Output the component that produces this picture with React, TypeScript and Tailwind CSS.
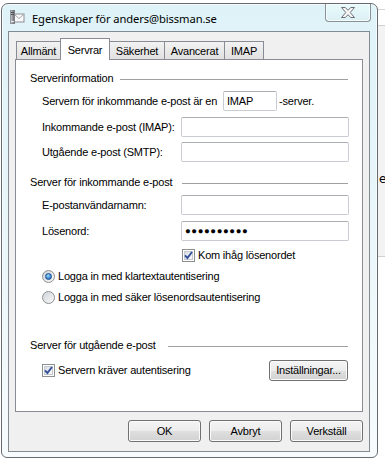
import React from "react";

// Windows 7 style property dialog – "Servrar" tab

function GroupHeader({ label, lineAt }: { label: string; lineAt: string }) {
  return (
    <div className="flex h-[18px] items-center pl-[14px] pr-[14px]">
      <span className={`${lineAt} shrink-0 whitespace-nowrap`}>{label}</span>
      <div className="mt-[2px] h-px flex-1 bg-[#a0a0a0]" />
    </div>
  );
}

function TextBox({ value, className = "" }: { value?: React.ReactNode; className?: string }) {
  return (
    <div
      className={`flex h-[20px] items-center rounded-[2px] border border-[#c9ccd2] border-t-[#abadb3] bg-white px-[3px] ${className}`}
    >
      {value}
    </div>
  );
}

function Checkbox() {
  return (
    <div className="flex h-[13px] w-[13px] shrink-0 items-center justify-center border border-[#8e8f8f] bg-white">
      <div className="flex h-[9px] w-[9px] items-center justify-center border border-[#c5c9cf] bg-linear-to-br from-[#d9dde3] to-[#fbfbfb]">
        <svg width="9" height="9" viewBox="0 0 9 9" className="overflow-visible">
          <path d="M1 4.3 L3.4 7 L8 1" fill="none" stroke="#34509a" strokeWidth="1.9" />
        </svg>
      </div>
    </div>
  );
}

function Radio({ checked }: { checked?: boolean }) {
  return (
    <div className="flex h-[13px] w-[13px] shrink-0 items-center justify-center rounded-full border border-[#8e8f8f] bg-linear-to-br from-[#cfd3d8] to-[#fafafa]">
      {checked && (
        <div className="h-[7px] w-[7px] rounded-full border border-[#1a4d8e] bg-[radial-gradient(circle_at_40%_35%,#a6dcf7_0%,#3c8fd4_55%,#1d5aa3_100%)]" />
      )}
    </div>
  );
}

function Button({ children, className = "" }: { children: React.ReactNode; className?: string }) {
  return (
    <div
      className={`flex items-center justify-center rounded-[3px] border border-[#707070] bg-[linear-gradient(to_bottom,#f4f4f4_0%,#ececec_50%,#dfdfdf_51%,#d2d2d2_100%)] shadow-[inset_0_0_0_1px_#fbfbfb] ${className}`}
    >
      {children}
    </div>
  );
}

function Tab({ label, w, selected }: { label: string; w: string; selected?: boolean }) {
  if (selected) {
    return (
      <div
        className={`${w} z-10 -mb-px -ml-px flex h-[22px] items-start justify-center border border-b-0 border-[#898c95] bg-white pt-[3px]`}
      >
        {label}
      </div>
    );
  }
  return (
    <div
      className={`${w} -ml-px flex h-[18px] items-center justify-center border border-b-0 border-[#898c95] bg-linear-to-b from-[#f2f2f2] to-[#e1e1e1] pt-px`}
    >
      {label}
    </div>
  );
}

export default function App() {
  return (
    <div className="flex h-[463px] w-[385px] overflow-hidden bg-white pl-px pt-[3px] font-['Liberation_Sans',Arial,sans-serif] text-[11px] tracking-[-0.2px] text-black">
      {/* Window frame */}
      <div className="flex h-[455px] w-[377px] shrink-0 flex-col rounded-t-[7px] rounded-b-[6px] border border-[#676b70] bg-linear-to-b from-[#def3f8] via-[#eaf6fa] to-[#f7fbfd] shadow-[inset_0_0_0_1px_#f6fcfe]">
        {/* Title bar */}
        <div className="flex h-[27px] shrink-0 items-start">
          <svg width="16" height="16" viewBox="0 0 16 16" className="ml-[7px] mt-[5px] shrink-0">
            <rect x="5" y="5" width="10" height="8" fill="#fbfbfb" stroke="#8a8d92" />
            <path d="M5.5 5.5 L10 9.5 L14.5 5.5" fill="none" stroke="#a4a7ab" />
            <rect x="1" y="1" width="5" height="14" fill="#7c8086" />
            <rect x="1.5" y="1.5" width="2" height="13" fill="#b2b6bb" />
            <rect x="2" y="3" width="3" height="1" fill="#4b4f55" />
            <rect x="2" y="5" width="3" height="1" fill="#4b4f55" />
            <rect x="2" y="12" width="3" height="1" fill="#e9ebee" />
          </svg>
          <span className="ml-[7px] mt-[7px] whitespace-nowrap font-['Noto_Sans',sans-serif] text-[11.2px] leading-[16px] tracking-[-0.1px] text-black">
            Egenskaper för anders@bissman.se
          </span>
          <div className="flex-1" />
          <div className="mr-[6px] flex h-[18px] w-[46px] shrink-0 items-center justify-center rounded-b-[4px] border border-t-0 border-[#8b9197] bg-linear-to-b from-[#e9fafb] to-[#dcf0f5] shadow-[inset_0_0_0_1px_#f4fdfe]">
            <svg width="14" height="11" viewBox="0 0 14 11">
              <path
                d="M0.5 0.5 H4.3 L7 3.3 L9.7 0.5 H13.5 L9.2 5.5 L13.5 10.5 H9.7 L7 7.7 L4.3 10.5 H0.5 L4.8 5.5 Z"
                fill="#f7f7f7"
                stroke="#6a6e73"
                strokeLinejoin="round"
              />
            </svg>
          </div>
        </div>

        {/* Client area */}
        <div className="mb-[5px] ml-[6px] mr-[7px] flex flex-1 flex-col border border-[#848a91] bg-[#f0f0f0] px-[6px] pt-[6px]">
          {/* Tabs */}
          <div className="flex h-[21px] items-end pl-[2px]">
            <Tab label="Allmänt" w="w-[45px]" />
            <Tab label="Servrar" w="w-[50px]" selected />
            <Tab label="Säkerhet" w="w-[56px]" />
            <Tab label="Avancerat" w="w-[61px]" />
            <Tab label="IMAP" w="w-[40px]" />
          </div>

          {/* Tab panel */}
          <div className="flex h-[353px] flex-col border border-[#898c95] bg-white pt-[9px]">
            <GroupHeader label="Serverinformation" lineAt="w-[90px]" />

            <div className="mt-[4px] flex h-[20px] items-center pl-[26px]">
              <span className="w-[181px] shrink-0 whitespace-nowrap">Servern för inkommande e-post är en</span>
              <TextBox value="IMAP" className="w-[54px]" />
              <span className="ml-[2px]">-server.</span>
            </div>
            <div className="mt-[6px] flex h-[20px] items-center pl-[26px]">
              <span className="w-[139px] shrink-0">Inkommande e-post (IMAP):</span>
              <TextBox className="w-[168px]" />
            </div>
            <div className="mt-[5px] flex h-[20px] items-center pl-[26px]">
              <span className="w-[139px] shrink-0">Utgående e-post (SMTP):</span>
              <TextBox className="w-[168px]" />
            </div>

            <div className="mt-[11px]">
              <GroupHeader label="Server för inkommande e-post" lineAt="w-[152px]" />
            </div>
            <div className="mt-[4px] flex h-[20px] items-center pl-[26px]">
              <span className="w-[139px] shrink-0">E-postanvändarnamn:</span>
              <TextBox className="w-[168px]" />
            </div>
            <div className="mt-[6px] flex h-[20px] items-center pl-[26px]">
              <span className="w-[139px] shrink-0">Lösenord:</span>
              <TextBox
                className="w-[168px]"
                value={<span className="text-[9.5px] tracking-[0.6px]">●●●●●●●●●●</span>}
              />
            </div>
            <div className="mt-[6px] flex h-[16px] items-center gap-[3px] pl-[166px]">
              <Checkbox />
              <span>Kom ihåg lösenordet</span>
            </div>
            <div className="mt-[5px] flex h-[16px] items-center gap-[3px] pl-[26px]">
              <Radio checked />
              <span>Logga in med klartextautentisering</span>
            </div>
            <div className="mt-[5px] flex h-[16px] items-center gap-[3px] pl-[26px]">
              <Radio />
              <span>Logga in med säker lösenordsautentisering</span>
            </div>

            <div className="mt-[31px]">
              <GroupHeader label="Server för utgående e-post" lineAt="w-[138px]" />
            </div>
            <div className="mt-[6px] flex h-[21px] items-center gap-[3px] pl-[26px] pr-[14px]">
              <Checkbox />
              <span>Servern kräver autentisering</span>
              <div className="flex-1" />
              <Button className="h-[21px] w-[79px]">Inställningar...</Button>
            </div>
          </div>

          {/* Dialog buttons */}
          <div className="mt-[8px] flex justify-end gap-[8px]">
            <Button className="h-[22px] w-[73px]">OK</Button>
            <Button className="h-[22px] w-[73px]">Avbryt</Button>
            <Button className="h-[22px] w-[73px]">Verkställ</Button>
          </div>
        </div>
      </div>

      {/* Desktop behind the dialog */}
      <div className="flex w-[7px] shrink-0 flex-col -mt-[3px]">
        <div className="h-[9px]" />
        <div className="h-px bg-[#d4d4d4]" />
        <div className="h-[15px]" />
        <div className="h-[232px] border-y border-[#d0d0d0] bg-[#f3f3f3] pt-[146px] pl-px font-['DejaVu_Sans',sans-serif] text-[12px] leading-[14px] tracking-normal">
          e
        </div>
      </div>
    </div>
  );
}
